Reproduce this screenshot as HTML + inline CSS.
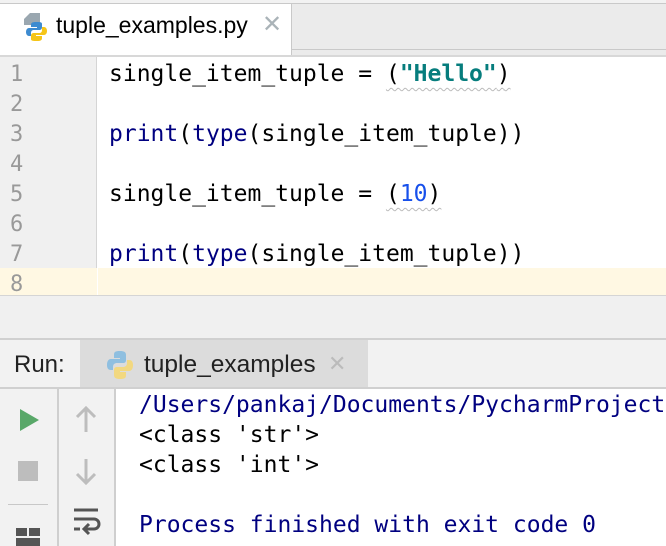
<!DOCTYPE html>
<html><head><style>
*{margin:0;padding:0;box-sizing:border-box}
body{width:666px;height:546px;overflow:hidden;background:#fff;position:relative;font-family:"DejaVu Sans Mono","Liberation Mono",monospace}
.abs{position:absolute}
.mono{font-family:"DejaVu Sans Mono",monospace;font-size:23px;white-space:pre}
.ln{position:absolute;left:10px;font-family:"DejaVu Sans Mono",monospace;font-size:22px;color:#999}
.code{position:absolute;left:109px}
.kw{color:#000080}
.s{color:#067d7d;font-weight:bold}
.n{color:#1750eb}
.sq{text-decoration:underline wavy #bbb;text-underline-offset:6px;text-decoration-thickness:1px}
.ui{font-family:"Liberation Sans",sans-serif}
</style></head><body>
<div class="abs" style="left:0;top:0;width:666px;height:3px;background:#f2f2f2"></div>
<div class="abs" style="left:0;top:3px;width:666px;height:1px;background:#c9c9c9"></div>
<div class="abs" style="left:0;top:4px;width:666px;height:52px;background:#ebebeb"></div>
<div class="abs" style="left:292px;top:49px;width:374px;height:1px;background:#c9c9c9"></div>
<div class="abs" style="left:0;top:4px;width:292px;height:52px;background:#fff;border-right:1px solid #c9c9c9"></div>
<div class="abs" style="left:0;top:55px;width:666px;height:2px;background:#d8d8d8"></div>
<svg class="abs" style="left:22px;top:11px" width="28" height="30" viewBox="0 0 28 30">
<path d="M2 8 L8 2 H18 V14 H2 Z" fill="#9aa7b0"/>
<path d="M14 11 c-4 0 -5 1 -5 3 v2 h6 v1 h-8 c-2 0 -3 2 -3 4 s1 4 3 4 h2 v-3 c0-2 1-3 3-3 h5 c2 0 3-1 3-3 v-3 c0-2-2-2-6-2z" fill="#3d8bd0"/>
<path d="M15 30 c4 0 5-1 5-3 v-2 h-6 v-1 h8 c2 0 3-2 3-4 s-1-4-3-4 h-2 v3 c0 2-1 3-3 3 h-5 c-2 0-3 1-3 3 v3 c0 2 2 2 6 2z" fill="#f5c518"/>
</svg>
<div class="abs ui" style="left:56px;top:12px;font-size:23px;color:#000">tuple_examples.py</div>
<div class="abs ui" style="left:262px;top:10px;font-size:24px;color:#aab3b8">✕</div>
<div class="abs" style="left:0;top:57px;width:97px;height:238px;background:#f0f0f0;border-right:1px solid #d5d5d5"></div>
<div class="abs" style="left:0;top:268px;width:97px;height:27px;background:#fff8e3"></div>
<div class="abs" style="left:98px;top:268px;width:568px;height:27px;background:#fff8e3"></div>
<div class="ln" style="top:62px">1</div>
<div class="ln" style="top:92px">2</div>
<div class="ln" style="top:122px">3</div>
<div class="ln" style="top:152px">4</div>
<div class="ln" style="top:182px">5</div>
<div class="ln" style="top:212px">6</div>
<div class="ln" style="top:242px">7</div>
<div class="ln" style="top:272px">8</div>
<div class="code mono" style="top:61px">single_item_tuple = <span class="sq">(<span class="s">"Hello"</span>)</span></div>
<div class="code mono" style="top:121px"><span class="kw">print</span>(<span class="kw">type</span>(single_item_tuple))</div>
<div class="code mono" style="top:181px">single_item_tuple = <span class="sq">(<span class="n">10</span>)</span></div>
<div class="code mono" style="top:241px"><span class="kw">print</span>(<span class="kw">type</span>(single_item_tuple))</div>
<div class="abs" style="left:0;top:295px;width:666px;height:1px;background:#d5d5d5"></div>
<div class="abs" style="left:0;top:296px;width:666px;height:43px;background:#f0f0f0"></div>
<div class="abs" style="left:0;top:338px;width:666px;height:2px;background:#d0d0d0"></div>
<div class="abs" style="left:0;top:340px;width:666px;height:48px;background:#f2f2f2"></div>
<div class="abs" style="left:80px;top:340px;width:288px;height:48px;background:#dcdcdc"></div>
<div class="abs ui" style="left:14px;top:351px;font-size:24px;color:#222">Run:</div>
<svg class="abs" style="left:106px;top:350px" width="28" height="30" viewBox="0 0 28 30">
<path d="M14 1 c-5 0 -6 1 -6 4 v3 h6 v1 h-9 c-3 0 -4 3 -4 6 s1 5 4 5 h2 v-3 c0-3 2-4 4-4 h6 c2 0 3-1 3-3 v-5 c0-3-2-4-6-4z" fill="#8fbfe0"/>
<path d="M14 29 c5 0 6-1 6-4 v-3 h-6 v-1 h9 c3 0 4-3 4-6 s-1-5-4-5 h-2 v3 c0 3-2 4-4 4 h-6 c-2 0-3 1-3 3 v5 c0 3 2 4 6 4z" fill="#f2d880"/>
</svg>
<div class="abs ui" style="left:144px;top:351px;font-size:24.5px;color:#222">tuple_examples</div>
<div class="abs ui" style="left:328px;top:351px;font-size:22px;color:#bbb">✕</div>
<div class="abs" style="left:0;top:387px;width:666px;height:2px;background:#d0d0d0"></div>
<div class="abs" style="left:0;top:389px;width:114px;height:157px;background:#f2f2f2"></div>
<div class="abs" style="left:57px;top:389px;width:2px;height:157px;background:#cfcfcf"></div>
<div class="abs" style="left:114px;top:389px;width:2px;height:157px;background:#cfcfcf"></div>
<svg class="abs" style="left:18px;top:407px" width="22" height="26"><path d="M2 2 L21 13 L2 24Z" fill="#59a869"/></svg>
<div class="abs" style="left:18px;top:461px;width:20px;height:20px;background:#bdbdbd"></div>
<div class="abs" style="left:8px;top:504px;width:40px;height:1px;background:#c8c8c8"></div>
<div class="abs" style="left:16px;top:528px;width:11px;height:8px;background:#555"></div>
<div class="abs" style="left:29px;top:528px;width:11px;height:8px;background:#555"></div>
<div class="abs" style="left:16px;top:538px;width:24px;height:8px;background:#555"></div>
<svg class="abs" style="left:74px;top:405px" width="24" height="30"><path d="M12 3 V27 M3 12 L12 3 L21 12" stroke="#bdbdbd" stroke-width="3" fill="none"/></svg>
<svg class="abs" style="left:74px;top:456px" width="24" height="30"><path d="M12 3 V27 M3 18 L12 27 L21 18" stroke="#bdbdbd" stroke-width="3" fill="none"/></svg>
<svg class="abs" style="left:72px;top:508px" width="30" height="32"><path d="M2 2 H26 M2 11 H22 a5 5 0 0 1 0 10 H14 M17 16 L12 21 L17 26 M2 21 H8" stroke="#555" stroke-width="3" fill="none"/></svg>
<div class="abs mono" style="left:139px;top:392px;color:#000080">/Users/pankaj/Documents/PycharmProjects</div>
<div class="abs mono" style="left:139px;top:422px;color:#000">&lt;class 'str'&gt;</div>
<div class="abs mono" style="left:139px;top:452px;color:#000">&lt;class 'int'&gt;</div>
<div class="abs mono" style="left:139px;top:512px;color:#000080">Process finished with exit code 0</div>
</body></html>
